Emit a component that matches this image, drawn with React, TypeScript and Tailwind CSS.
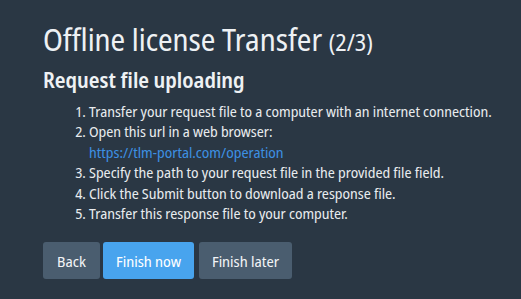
const steps = [
  "Transfer your request file to a computer with an internet connection.",
  "Open this url in a web browser:",
  "Specify the path to your request file in the provided file field.",
  "Click the Submit button to download a response file.",
  "Transfer this response file to your computer.",
];

export default function App() {
  return (
    <div className="min-h-screen bg-[#2a3744] pl-[43px] pt-[22px] font-['Noto_Sans_Display','Noto_Sans',sans-serif] font-stretch-[80%] text-[#eef1f4]">
      <h1 className="text-[30px] leading-[36px] font-normal">
        Offline license Transfer <span className="text-[23px]">(2/3)</span>
      </h1>
      <h2 className="mt-[6px] text-[21px] leading-[28px] font-semibold">
        Request file uploading
      </h2>
      <ol className="mt-[7px] list-decimal pl-[46px] text-[14.5px] leading-[20.4px] text-[#e8ebee]">
        <li>{steps[0]}</li>
        <li>
          {steps[1]}
          <br />
          <a href="#" className="text-[#3d90e2]">
            https://tlm-portal.com/operation
          </a>
        </li>
        <li>{steps[2]}</li>
        <li>{steps[3]}</li>
        <li>{steps[4]}</li>
      </ol>
      <div className="mt-[19px] flex text-[15px]">
        <button className="h-[37px] w-[57px] rounded-[3px] bg-[#4a5d6f] text-[#f2f4f6]">
          Back
        </button>
        <button className="ml-[3px] h-[37px] w-[91px] rounded-[3px] bg-[#48a4ee] text-white">
          Finish now
        </button>
        <button className="ml-[5px] h-[37px] w-[93px] rounded-[3px] bg-[#4a5d6f] text-[#f2f4f6]">
          Finish later
        </button>
      </div>
    </div>
  );
}
